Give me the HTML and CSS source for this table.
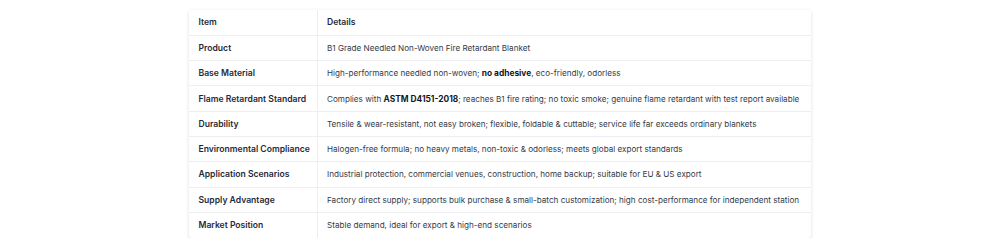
FILE: index.html
```html
<!DOCTYPE html>
<html lang="en">
<head>
<meta charset="utf-8">
<title>B1 Fire Retardant Blanket</title>
<link rel="stylesheet" href="styles.css">
</head>
<body>
<div class="card">
  <table class="spec">
    <colgroup><col class="col-item"><col class="col-details"></colgroup>
    <thead>
      <tr><th class="c1">Item</th><th class="c2">Details</th></tr>
    </thead>
    <tbody>
      <tr><td class="c1">Product</td><td>B1 Grade Needled Non-Woven Fire Retardant Blanket</td></tr>
      <tr><td class="c1">Base Material</td><td>High-performance needled non-woven; <strong>no adhesive</strong>, eco-friendly, odorless</td></tr>
      <tr><td class="c1">Flame Retardant Standard</td><td>Complies with <strong>ASTM D4151-2018</strong>; reaches B1 fire rating; no toxic smoke; genuine flame retardant with test report available</td></tr>
      <tr><td class="c1">Durability</td><td>Tensile &amp; wear-resistant, not easy broken; flexible, foldable &amp; cuttable; service life far exceeds ordinary blankets</td></tr>
      <tr><td class="c1">Environmental Compliance</td><td>Halogen-free formula; no heavy metals, non-toxic &amp; odorless; meets global export standards</td></tr>
      <tr><td class="c1">Application Scenarios</td><td>Industrial protection, commercial venues, construction, home backup; suitable for EU &amp; US export</td></tr>
      <tr><td class="c1">Supply Advantage</td><td>Factory direct supply; supports bulk purchase &amp; small-batch customization; high cost-performance for independent station</td></tr>
      <tr><td class="c1">Market Position</td><td>Stable demand, ideal for export &amp; high-end scenarios</td></tr>
    </tbody>
  </table>
</div>
</body>
</html>
```
FILE: styles.css
```css
html, body {
  margin: 0;
  padding: 0;
  background: #ffffff;
}
body {
  font-family: Inter, "Noto Sans", "Liberation Sans", sans-serif;
  color: #333b47;
  padding-top: 10px;
}
.card {
  width: 622px;
  margin: 0 auto;
  background: #fff;
  border-radius: 3px;
  box-shadow: 0 1px 4px rgba(0,0,0,0.10), 0 1px 2px rgba(0,0,0,0.05);
  overflow: hidden;
}
.spec {
  width: 100%;
  border-collapse: collapse;
  table-layout: fixed;
  font-size: 8.15px;
}
.col-item {
  width: 128px;
}
.spec th, .spec td {
  height: 25.3px;
  padding: 0 9px 0 9.5px;
  text-align: left;
  vertical-align: middle;
  border-bottom: 1px solid #eceef1;
  box-sizing: border-box;
  white-space: nowrap;
}
.spec tr:last-child td {
  border-bottom: none;
}
.spec th {
  font-weight: 600;
  color: #1f2937;
  font-size: 8.6px;
}
.spec .c1 {
  font-weight: 600;
  font-size: 8.6px;
  color: #1f2937;
  border-right: 1px solid #eceef1;
}
.spec strong {
  font-weight: 700;
  font-size: 8.4px;
  color: #111827;
}
```
